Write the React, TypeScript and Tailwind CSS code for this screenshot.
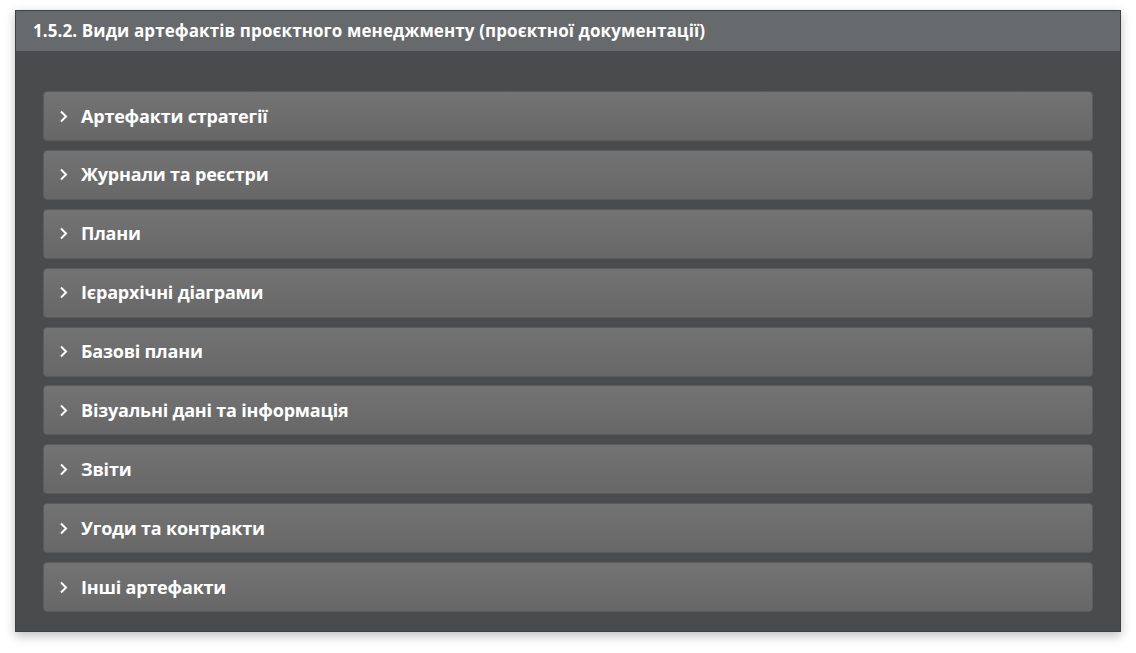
const items = [
  "Артефакти стратегії",
  "Журнали та реєстри",
  "Плани",
  "Ієрархічні діаграми",
  "Базові плани",
  "Візуальні дані та інформація",
  "Звіти",
  "Угоди та контракти",
  "Інші артефакти",
];

function Chevron() {
  return (
    <svg width="9" height="13" viewBox="0 0 9 13" className="shrink-0">
      <path d="M2 1.5 L7 6.5 L2 11.5" fill="none" stroke="white" strokeWidth="2" />
    </svg>
  );
}

export default function App() {
  return (
    <div className="w-[1136px] h-[653px] bg-white pt-[10px] pl-[15px] font-['Open_Sans',sans-serif]">
      <div className="w-[1106px] h-[622px] bg-[#4a4b4d] border border-[#3e3f41] shadow-[0_4px_10px_rgba(0,0,0,0.25)] flex flex-col">
        <div className="h-[40px] bg-[#676a6d] flex items-center pl-[17px] text-white font-bold text-[17px] tracking-[0.1px]">
          1.5.2. Види артефактів проєктного менеджменту (проєктної документації)
        </div>
        <div className="flex flex-col gap-[8.875px] pt-[40px] px-[27px]">
          {items.map((t) => (
            <div
              key={t}
              className="h-[50px] rounded-[4px] border border-[#5c5c5c] bg-gradient-to-b from-[#737373] to-[#676767] flex items-center pl-[15px] gap-[13px] text-white font-bold text-[18px] tracking-[-0.2px]"
            >
              <Chevron />
              <span>{t}</span>
            </div>
          ))}
        </div>
      </div>
    </div>
  );
}
